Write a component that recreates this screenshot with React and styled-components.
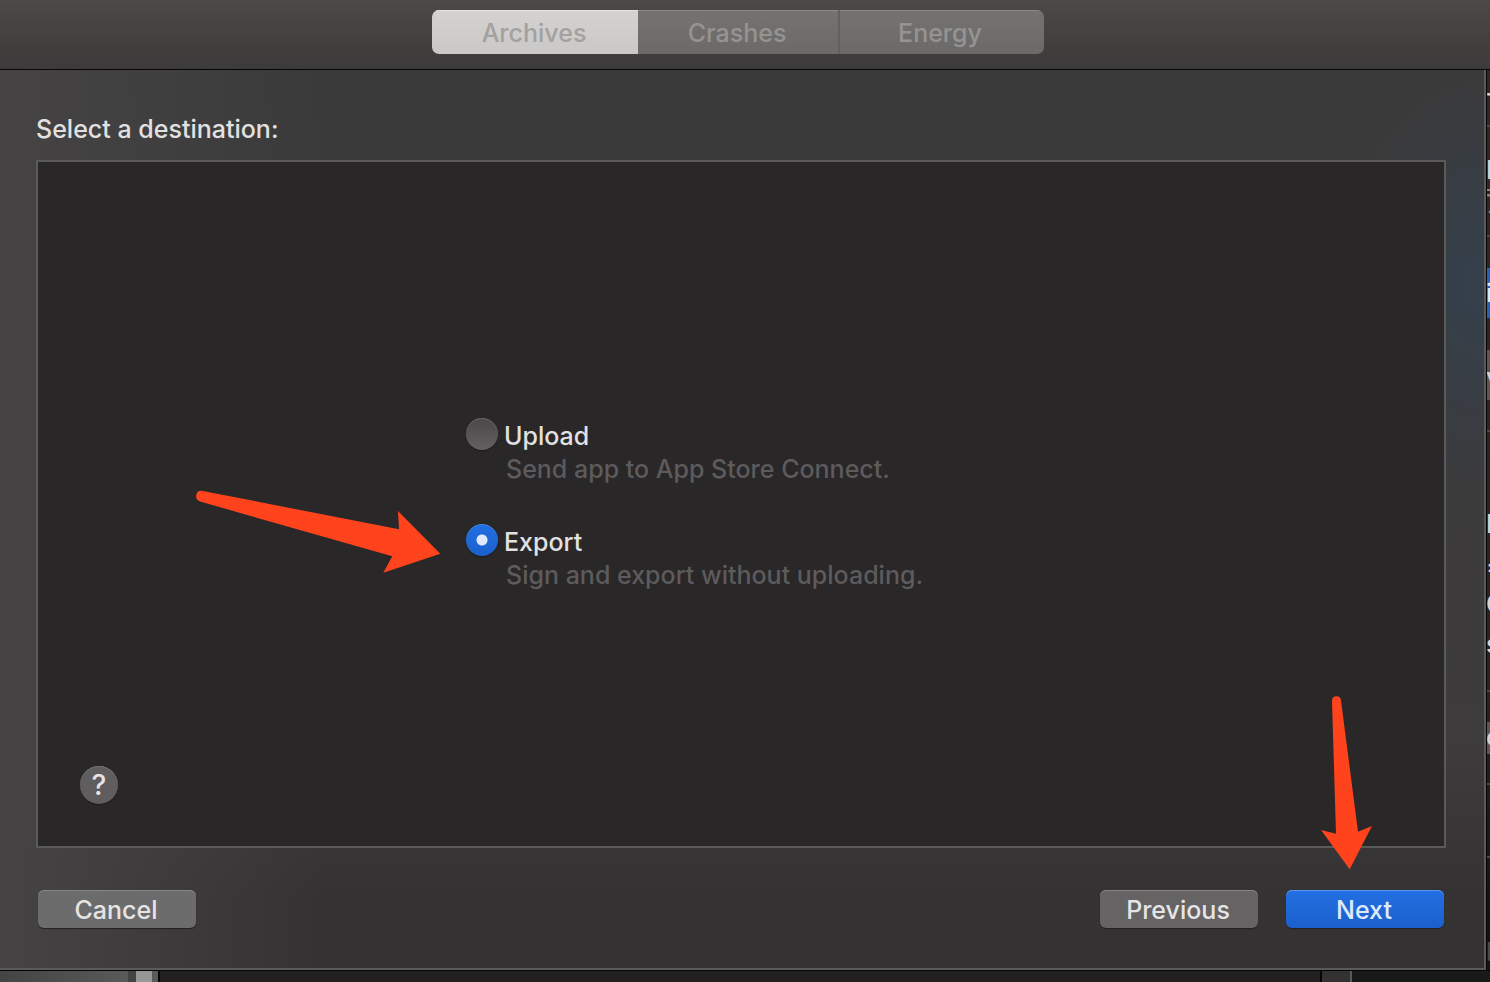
import React from "react";
import styled, { createGlobalStyle, css } from "styled-components";

const GlobalStyle = createGlobalStyle`
  * { box-sizing: border-box; }
  body {
    margin: 0;
    background: #1b1b1b;
    color: #e2e1e1;
    font-family: Inter, "Liberation Sans", sans-serif;
    font-size: 25px;
    font-weight: 500;
  }
  button, input { font: inherit; margin: 0; }
`;

const Window = styled.div`
  display: flex;
  flex-direction: column;
  min-height: 100vh;
  overflow: hidden;
`;

const Toolbar = styled.header`
  display: flex;
  justify-content: center;
  padding: 10px 14px 15px 0;
  background: linear-gradient(#4b4a47, #3c3a3a);
  border-bottom: 1px solid #050505;
`;

const Segments = styled.div`
  display: flex;
  border-radius: 7px;
  overflow: hidden;
`;

const Segment = styled.button`
  width: ${(p) => p.$width}px;
  height: 44px;
  padding: 2px 2px 0 0;
  border: 0;
  color: #959492;
  background: linear-gradient(#747370, #6b6a69);
  box-shadow: inset 0 1px #8a8987;
  & + & + & {
    padding-right: 4px;
    border-left: 2px solid #626160;
  }
  ${(p) =>
    p.$active &&
    css`
      color: #a2a19f;
      background: linear-gradient(#d4d3d1, #c9c8c6);
      box-shadow: inset 0 1px #e6e5e3;
    `}
`;

const Body = styled.div`
  flex: 1;
  display: flex;
`;

const Sheet = styled.main`
  flex: 1;
  min-width: 0;
  display: flex;
  flex-direction: column;
  padding: 42px 38px 40px 36px;
  border-right: 2px solid #5b5a5a;
  border-bottom: 2px solid #5b5a5a;
  background:
    radial-gradient(ellipse 150px 220px at 100% 24%, #34404c, rgba(52, 64, 76, 0)),
    linear-gradient(90deg, #454343, rgba(69, 67, 67, 0) 22%),
    linear-gradient(#3b3a3a, #3d3b3c 75%, #343233 92%);
`;

const Title = styled.h1`
  margin: 0 0 14px;
  font-size: 25px;
  font-weight: 500;
  line-height: 34px;
`;

const Panel = styled.section`
  flex: 1;
  display: grid;
  grid-template-rows: 1fr auto 1fr;
  padding: 0 42px;
  border: 2px solid #5b5a5a;
  background: #292728;
`;

const Options = styled.div`
  grid-row: 2;
  position: relative;
  display: flex;
  flex-direction: column;
  gap: 40px;
  margin-left: 386px;
`;

const OptionLabel = styled.label`
  display: flex;
  gap: 6px;
  line-height: 36px;
`;

const Radio = styled.input`
  appearance: none;
  width: 32px;
  height: 32px;
  border-radius: 50%;
  background: linear-gradient(#4a4849, #626061);
  box-shadow: inset 0 1px #686667, 0 1px 1px #1c1b1b;
  &:checked {
    background:
      radial-gradient(circle, #dfe9fb 5px, rgba(223, 233, 251, 0) 6px),
      linear-gradient(#226fe3, #1b60cb);
    box-shadow: inset 0 1px #4a89e6, 0 1px 1px #1c1b1b;
  }
`;

const Description = styled.p`
  margin: 0 0 0 40px;
  color: #5d5b5c;
  line-height: 30px;
`;

const HelpButton = styled.button`
  grid-row: 3;
  align-self: end;
  width: 38px;
  height: 38px;
  margin-bottom: 42px;
  padding: 0;
  border: 0;
  border-radius: 50%;
  color: #e6e5e5;
  background: #5f5d5e;
  box-shadow: inset 0 1px #737172, 0 1px 1px #1c1b1b;
  font-size: 28px;
`;

const Footer = styled.footer`
  display: flex;
  gap: 28px;
  padding: 42px 2px 0;
`;

const Spacer = styled.div`
  flex: 1;
`;

const Action = styled.div`
  position: relative;
`;

const PushButton = styled.button`
  width: 158px;
  height: 38px;
  padding: 2px 2px 0 0;
  border: 0;
  border-radius: 6px;
  color: ${(p) => (p.$primary ? "#dfe9fb" : "#e6e5e5")};
  background: ${(p) =>
    p.$primary ? "linear-gradient(#226fe3, #1b60cb)" : p.$light ? "#6d6c6c" : "#656364"};
  box-shadow:
    inset 0 1px ${(p) => (p.$primary ? "#5b95ea" : "#868485")},
    0 1px 1px #222;
`;

const ExportArrow = styled.svg`
  position: absolute;
  left: -270px;
  top: 72px;
  pointer-events: none;
`;

const NextArrow = styled.svg`
  position: absolute;
  left: 34px;
  top: -194px;
  pointer-events: none;
`;

const Inspector = styled.aside`
  width: 4px;
  overflow: hidden;
  border-left: 1px solid #050505;
  background: linear-gradient(#2c2a28, #252423 70%, #131313 94%);
`;

const InspectorRow = styled.div`
  height: ${(p) => p.$height}px;
  padding-top: ${(p) => p.$top || 0}px;
  line-height: 26px;
  text-indent: -1px;
  white-space: nowrap;
  color: ${(p) => p.$color || "#d5d4d3"};
  background: ${(p) => p.$fill || "transparent"};
  border-bottom: ${(p) => (p.$line ? `2px solid ${p.$line}` : "0")};
`;

const BottomStrip = styled.div`
  display: flex;
  height: 12px;
  border-top: 1px solid #050505;
`;

const StripPart = styled.div`
  flex: ${(p) => (p.$width ? `0 0 ${p.$width}px` : "1")};
  background: ${(p) => p.$fill};
`;

const rows = [
  { height: 57, top: 20, text: "T", line: "#4c4a49" },
  { height: 64, top: 30, text: "D", line: "#8a8887" },
  { height: 46, top: 0, text: "7", color: "#8a8887", line: "#4c4a49" },
  { height: 31 },
  { height: 50, top: 12, text: "i", fill: "#2563b8", color: "#dfe9fb" },
  { height: 32 },
  { height: 50, top: 14, text: "v", fill: "#5a5857" },
  { height: 32, line: "#4c4a49" },
  { height: 79 },
  { height: 40, top: 0, text: "I" },
  { height: 40, top: 2, text: "=" },
  { height: 40, top: 0, text: "C" },
  { height: 61, top: 0, text: "s", line: "#4c4a49" },
  { height: 30 },
  { height: 32, top: 2, text: "o", fill: "#5a5857" },
  { height: 31, line: "#4c4a49" },
  { height: 73, line: "#4c4a49" },
  { height: 110, top: 76, text: "p", color: "#4c4a49" },
];

const strip = [
  { width: 128, fill: "linear-gradient(90deg, #454444, #5a5959)" },
  { width: 8, fill: "#444343" },
  { width: 16, fill: "#989797" },
  { width: 6, fill: "#5a5959" },
  { width: 2, fill: "#050505" },
  { fill: "#222120" },
  { width: 2, fill: "#050505" },
  { width: 28, fill: "#333132" },
  { width: 2, fill: "#5b5a5a" },
  { width: 138, fill: "#191918" },
];

function Option({ id, label, description, checked }) {
  return (
    <div>
      <OptionLabel htmlFor={id}>
        <Radio
          type="radio"
          name="destination"
          id={id}
          defaultChecked={checked}
          aria-describedby={`${id}-description`}
        />
        {label}
      </OptionLabel>
      <Description id={`${id}-description`}>{description}</Description>
    </div>
  );
}

export default function App() {
  return (
    <>
      <GlobalStyle />
      <Window>
        <Toolbar>
          <Segments>
            <Segment $width={206} $active>Archives</Segment>
            <Segment $width={200}>Crashes</Segment>
            <Segment $width={206}>Energy</Segment>
          </Segments>
        </Toolbar>
        <Body>
          <Sheet>
            <Title>Select a destination:</Title>
            <Panel>
              <Options role="radiogroup" aria-label="Destination">
                <Option
                  id="upload"
                  label="Upload"
                  description="Send app to App Store Connect."
                />
                <Option
                  id="export"
                  label="Export"
                  description="Sign and export without uploading."
                  checked
                />
                <ExportArrow width="246" height="84" viewBox="0 0 246 84" aria-hidden="true">
                  <path
                    d="M5.5 0.7 L203 39.3 L202 21 L244.3 63.7 L187.3 82.7 L196.3 66.3 L4 11.5 Q0 10 0 6 Q1 0 5.5 0.7 Z"
                    fill="#ff431c"
                  />
                </ExportArrow>
              </Options>
              <HelpButton aria-label="Help">?</HelpButton>
            </Panel>
            <Footer>
              <PushButton $light>Cancel</PushButton>
              <Spacer />
              <PushButton>Previous</PushButton>
              <Action>
                <PushButton $primary>Next</PushButton>
                <NextArrow width="54" height="176" viewBox="0 0 54 176" aria-hidden="true">
                  <path
                    d="M12 5 Q12 0.5 16.5 0.3 Q20.5 0.3 21 4.5 L38 135.7 L52 130 L29.7 173.3 L1 134 L16 137.7 Z"
                    fill="#ff431c"
                  />
                </NextArrow>
              </Action>
            </Footer>
          </Sheet>
          <Inspector aria-hidden="true">
            {rows.map((row, i) => (
              <InspectorRow
                key={i}
                $height={row.height}
                $top={row.top}
                $fill={row.fill}
                $color={row.color}
                $line={row.line}
              >
                {row.text}
              </InspectorRow>
            ))}
          </Inspector>
        </Body>
        <BottomStrip>
          {strip.map((part, i) => (
            <StripPart key={i} $width={part.width} $fill={part.fill} />
          ))}
        </BottomStrip>
      </Window>
    </>
  );
}
